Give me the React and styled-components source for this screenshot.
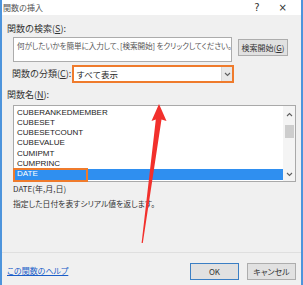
import styled, { createGlobalStyle } from "styled-components";

const GlobalStyle = createGlobalStyle`
  html, body {
    margin: 0;
    padding: 0;
    background: #f0f0f0;
  }
  * {
    box-sizing: border-box;
  }
`;

const FONT = `"Noto Sans CJK JP", "Liberation Sans", sans-serif`;

const functions = [
  "CUBERANKEDMEMBER",
  "CUBESET",
  "CUBESETCOUNT",
  "CUBEVALUE",
  "CUMIPMT",
  "CUMPRINC",
  "DATE",
];

const App = () => {
  return (
    <>
      <GlobalStyle />
      <Window>
        <TitleBar>
          <Title>関数の挿入</Title>
          <TitleButtons>
            <TitleIcon>?</TitleIcon>
            <TitleIcon>×</TitleIcon>
          </TitleButtons>
        </TitleBar>
        <Main>
          <Label>
            関数の検索(<u>S</u>):
          </Label>
          <SearchRow>
            <SearchBox>
              何がしたいかを簡単に入力して、[検索開始] をクリックしてください。
            </SearchBox>
            <Button>
              検索開始(<u>G</u>)
            </Button>
          </SearchRow>
          <CategoryRow>
            <Label>
              関数の分類(<u>C</u>):
            </Label>
            <Select>
              <span>すべて表示</span>
              <DropButton>
                <Chevron />
              </DropButton>
            </Select>
          </CategoryRow>
          <Label $top={6}>
            関数名(<u>N</u>):
          </Label>
          <ListBox>
            <Items>
              {functions.map((name) => (
                <Item key={name} $selected={name === "DATE"}>
                  {name}
                </Item>
              ))}
            </Items>
            <ScrollBar>
              <Chevron $up />
              <Thumb />
              <ScrollSpacer />
              <Chevron />
            </ScrollBar>
            <Highlight />
          </ListBox>
          <Syntax>DATE(年,月,日)</Syntax>
          <Description>指定した日付を表すシリアル値を返します。</Description>
        </Main>
        <Footer>
          <HelpLink href="#">この関数のヘルプ</HelpLink>
          <Buttons>
            <Button $primary $wide>
              OK
            </Button>
            <Button $wide>キャンセル</Button>
          </Buttons>
        </Footer>
        <Arrow viewBox="0 0 303 285" width="303" height="285">
          <polygon
            points="159,104 166.5,121 161.5,119.5 142.8,243 141.6,243 155.8,119.5 151.5,121"
            fill="#f2302c"
          />
        </Arrow>
      </Window>
    </>
  );
};

const Chevron = ({ $up }) => (
  <svg width="7" height="5" viewBox="0 0 7 5">
    <path
      d={$up ? "M1 4 L3.5 1.5 L6 4" : "M1 1 L3.5 3.5 L6 1"}
      fill="none"
      stroke="#606060"
      strokeWidth="1.1"
    />
  </svg>
);

const Window = styled.div`
  position: relative;
  width: 303px;
  height: 285px;
  background: #f0f0f0;
  border-left: 2px solid #4d94dc;
  border-right: 2px solid #4d94dc;
  display: flex;
  flex-direction: column;
  font-family: ${FONT};
  color: #222;
  overflow: hidden;
`;

const TitleBar = styled.div`
  height: 15px;
  background: #fff;
  display: flex;
  align-items: center;
  justify-content: space-between;
  padding-left: 1px;
`;

const Title = styled.div`
  font-size: 8px;
  color: #555;
  line-height: 1;
`;

const TitleButtons = styled.div`
  display: flex;
  align-items: center;
  gap: 19px;
  padding-right: 14px;
`;

const TitleIcon = styled.span`
  font-family: "DejaVu Sans", sans-serif;
  font-size: 10px;
  color: #333;
  line-height: 1;
`;

const Main = styled.div`
  flex: 1;
  display: flex;
  flex-direction: column;
  padding: 8px 5px 0 5px;
`;

const Label = styled.div`
  font-size: 9px;
  line-height: 12px;
  margin-top: ${(p) => p.$top || 0}px;
  color: #333;
  white-space: nowrap;

  u {
    text-decoration: underline;
  }
`;

const SearchRow = styled.div`
  display: flex;
  align-items: flex-start;
  gap: 6px;
  margin: 2px 0 0 6px;
`;

const SearchBox = styled.div`
  width: 219px;
  height: 25px;
  background: #fff;
  border: 1px solid #acacac;
  padding: 3px 3px;
  font-size: 7.6px;
  line-height: 10px;
  color: #555;
  white-space: nowrap;
  overflow: hidden;
  font-feature-settings: "palt";
  letter-spacing: -0.1px;
`;

const Button = styled.div`
  width: ${(p) => (p.$wide ? 49 : 50)}px;
  height: 17px;
  margin-top: ${(p) => (p.$wide ? 0 : 2)}px;
  background: #e1e1e1;
  border: ${(p) => (p.$primary ? "1.5px solid #3b7fc4" : "1px solid #adadad")};
  display: flex;
  align-items: center;
  justify-content: center;
  font-size: 8px;
  color: #333;
  white-space: nowrap;
  font-feature-settings: "palt";
`;

const CategoryRow = styled.div`
  display: flex;
  align-items: center;
  gap: 1px;
  margin: 3px 0 0 5px;
`;

const Select = styled.div`
  width: 162px;
  height: 18px;
  background: #fff;
  border: 2px solid #ef7b2c;
  display: flex;
  align-items: center;
  justify-content: space-between;
  padding-left: 2px;
  font-size: 8.5px;
  color: #222;
`;

const DropButton = styled.div`
  width: 11px;
  height: 100%;
  display: flex;
  align-items: center;
  justify-content: center;
  background: #e8e8e8;
  border-left: 1px solid #d8d8d8;
`;

const ListBox = styled.div`
  position: relative;
  width: 283px;
  height: 77px;
  margin: 4px 0 0 6px;
  background: #fff;
  border: 1px solid #a9a9a9;
  display: flex;
`;

const Items = styled.div`
  flex: 1;
  padding-top: 1.5px;
`;

const Item = styled.div`
  height: 10.3px;
  line-height: 10.3px;
  padding-left: 3px;
  font-size: 8px;
  font-family: "Liberation Sans", sans-serif;
  color: ${(p) => (p.$selected ? "#fff" : "#222")};
  background: ${(p) => (p.$selected ? "#2f8ff0" : "transparent")};
`;

const ScrollBar = styled.div`
  width: 12px;
  display: flex;
  flex-direction: column;
  align-items: center;
  padding: 6px 0 4px;
  background: #f4f4f4;
`;

const Thumb = styled.div`
  width: 9px;
  height: 13px;
  margin-top: 8px;
  background: #cdcdcd;
`;

const ScrollSpacer = styled.div`
  flex: 1;
`;

const Highlight = styled.div`
  position: absolute;
  left: -1px;
  top: 62px;
  width: 75px;
  height: 14px;
  border: 2px solid #ef7b2c;
`;

const Syntax = styled.div`
  margin: 0 0 0 6px;
  font-size: 8px;
  line-height: 13px;
  color: #333;
`;

const Description = styled.div`
  margin: 2px 0 0 6px;
  font-size: 7.8px;
  line-height: 13px;
  color: #333;
  font-feature-settings: "palt";
`;

const Footer = styled.div`
  height: 33px;
  border-top: 1px solid #dfdfdf;
  display: flex;
  align-items: flex-start;
  justify-content: space-between;
  padding: 10px 5px 0 5px;
`;

const HelpLink = styled.a`
  margin-top: 3px;
  font-size: 8px;
  line-height: 10px;
  color: #1a5dc8;
  text-decoration: underline;
  font-feature-settings: "palt";
`;

const Buttons = styled.div`
  display: flex;
  gap: 8px;
`;

const Arrow = styled.svg`
  position: absolute;
  left: -2px;
  top: 0;
  pointer-events: none;
`;

export default App;
